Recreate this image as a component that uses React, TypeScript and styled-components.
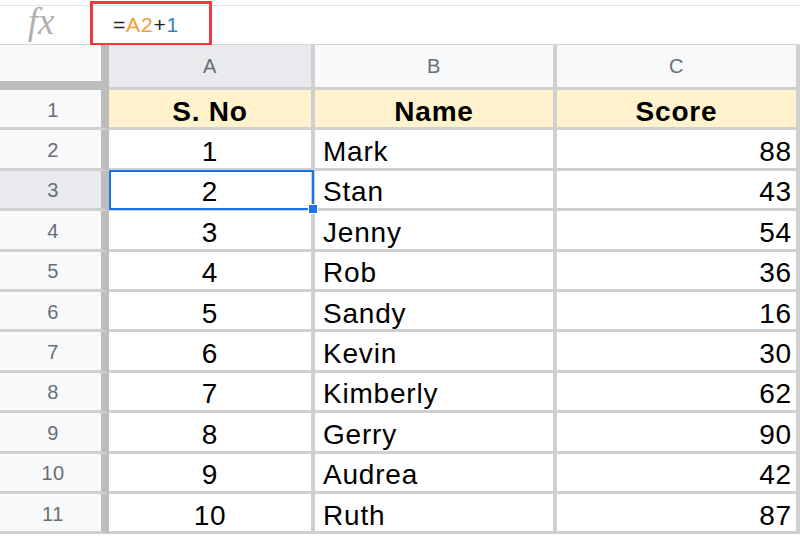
import styled, { createGlobalStyle } from "styled-components";

const GlobalStyle = createGlobalStyle`
  html, body {
    margin: 0;
    padding: 0;
    background: #ffffff;
  }
  body {
    font-family: "Liberation Sans", Arial, sans-serif;
  }
`;

const Page = styled.div`
  width: 800px;
  height: 536px;
  overflow: hidden;
  background: #ffffff;
`;

const FormulaBar = styled.div`
  margin-top: 5px;
  height: 38px;
  border-top: 1px solid #e3e3e3;
  border-bottom: 1px solid #d6d6d6;
  display: flex;
  align-items: stretch;
`;

const FxLabel = styled.div`
  width: 90px;
  display: flex;
  align-items: center;
  justify-content: center;
  font-family: "Liberation Serif", "Times New Roman", serif;
  font-style: italic;
  font-size: 37px;
  color: #b0b0b0;
  padding: 0 8px 7px 0;
  box-sizing: border-box;
`;

const FormulaBox = styled.div`
  margin: -5px 0 -2px;
  width: 122px;
  box-sizing: border-box;
  border: 3px solid #ec3b3f;
  display: flex;
  align-items: center;
  padding-left: 20px;
  padding-top: 2px;
  font-size: 21px;
  letter-spacing: 0.8px;
  color: #222;
`;

const Token = styled.span<{ $tone?: "ref" | "num" }>`
  color: ${(p) =>
    p.$tone === "ref" ? "#f0a13a" : p.$tone === "num" ? "#3b7fc4" : "#222"};
`;

const Sheet = styled.div`
  display: grid;
  grid-template-columns: 109px 206px 242px 243px;
  grid-template-rows: 45px repeat(11, 40.4px);
`;

const Cell = styled.div<{
  $kind?: "corner" | "col" | "row" | "head" | "data";
  $align?: "left" | "center" | "right";
  $active?: boolean;
}>`
  box-sizing: border-box;
  position: relative;
  display: flex;
  align-items: center;
  justify-content: ${(p) =>
    p.$align === "left" ? "flex-start" : p.$align === "right" ? "flex-end" : "center"};
  padding: ${(p) =>
    p.$kind === "row"
      ? "3px 0 0 5px"
      : p.$kind === "col"
      ? "0"
      : p.$align === "left"
      ? "6px 0 0 8px"
      : p.$align === "right"
      ? "6px 4px 0 0"
      : "6px 0 0 0"};
  border-right: ${(p) =>
    p.$kind === "corner" || p.$kind === "row" ? "8px solid #bdbdbd" : "4px solid #d0d0d0"};
  border-bottom: ${(p) =>
    p.$kind === "corner" ? "9px solid #bdbdbd" : "3px solid #d0d0d0"};
  background: ${(p) =>
    p.$kind === "head"
      ? "#fff2cc"
      : p.$kind === "col" || p.$kind === "row" || p.$kind === "corner"
      ? p.$active
        ? "#e8eaed"
        : "#f8f9fa"
      : "#ffffff"};
  color: ${(p) => (p.$kind === "col" || p.$kind === "row" ? "#6a6e73" : "#000")};
  font-size: ${(p) => (p.$kind === "col" || p.$kind === "row" ? "20px" : "28px")};
  font-weight: ${(p) => (p.$kind === "head" ? 700 : 400)};
  letter-spacing: ${(p) => (p.$kind === "col" || p.$kind === "row" ? "0.5px" : "0.8px")};
  white-space: nowrap;
`;

const Selected = styled.div`
  position: absolute;
  z-index: 2;
  left: 0;
  top: -1px;
  right: -3px;
  bottom: -2px;
  border: 2px solid #1a73e8;
  pointer-events: none;

  &::after {
    content: "";
    position: absolute;
    right: -6px;
    bottom: -6px;
    width: 8px;
    height: 8px;
    background: #1a73e8;
    border: 1px solid #ffffff;
  }
`;

const rows: [number, string, number][] = [
  [1, "Mark", 88],
  [2, "Stan", 43],
  [3, "Jenny", 54],
  [4, "Rob", 36],
  [5, "Sandy", 16],
  [6, "Kevin", 30],
  [7, "Kimberly", 62],
  [8, "Gerry", 90],
  [9, "Audrea", 42],
  [10, "Ruth", 87],
];

function App() {
  return (
    <Page>
      <GlobalStyle />
      <FormulaBar>
        <FxLabel>fx</FxLabel>
        <FormulaBox>
          <Token>=</Token>
          <Token $tone="ref">A2</Token>
          <Token>+</Token>
          <Token $tone="num">1</Token>
        </FormulaBox>
      </FormulaBar>
      <Sheet>
        <Cell $kind="corner" />
        <Cell $kind="col" $active>
          A
        </Cell>
        <Cell $kind="col">B</Cell>
        <Cell $kind="col">C</Cell>

        <Cell $kind="row">1</Cell>
        <Cell $kind="head">S. No</Cell>
        <Cell $kind="head">Name</Cell>
        <Cell $kind="head">Score</Cell>

        {rows.map(([no, name, score], i) => (
          <>
            <Cell key={`r${i}`} $kind="row" $active={no === 2}>
              {i + 2}
            </Cell>
            <Cell key={`a${i}`} $kind="data">
              {no}
              {no === 2 ? <Selected /> : null}
            </Cell>
            <Cell key={`b${i}`} $kind="data" $align="left">
              {name}
            </Cell>
            <Cell key={`c${i}`} $kind="data" $align="right">
              {score}
            </Cell>
          </>
        ))}
      </Sheet>
    </Page>
  );
}

export default App;
